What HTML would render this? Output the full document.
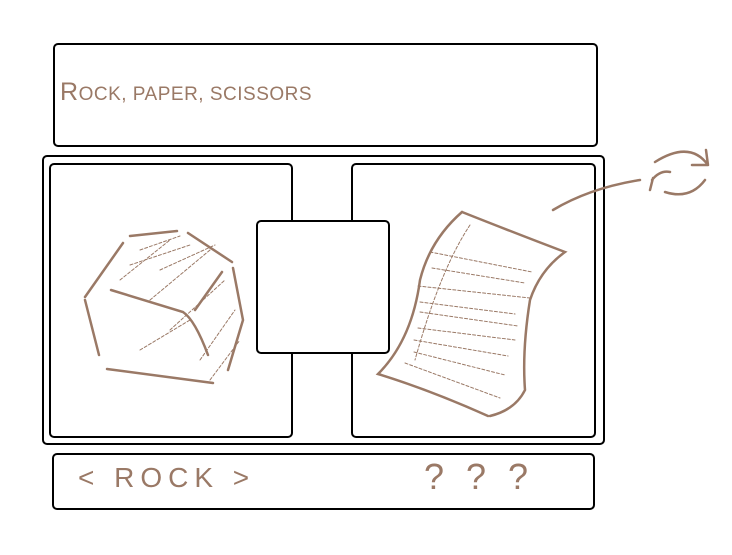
<!DOCTYPE html>
<html><head><style>
body{margin:0;width:732px;height:555px;background:#fff;position:relative;overflow:hidden;font-family:"Liberation Sans",sans-serif;}
.b{position:absolute;border:2px solid #000;border-radius:5px;box-sizing:border-box;background:transparent}
.t{position:absolute;color:#9a7966;white-space:nowrap}
</style></head><body>
<div class="b" style="left:53px;top:43px;width:545px;height:104px"></div>
<div class="b" style="left:42px;top:155px;width:563px;height:290px"></div>
<div class="b" style="left:49px;top:163px;width:244px;height:275px"></div>
<div class="b" style="left:351px;top:163px;width:245px;height:275px"></div>
<div class="b" style="left:256px;top:220px;width:134px;height:134px;background:#fff"></div>
<div class="b" style="left:52px;top:453px;width:543px;height:57px"></div>
<div class="t" style="left:60px;top:78px;font-size:25px;letter-spacing:0.5px"><span>R</span><span style="font-size:19px">OCK, PAPER, SCISSORS</span></div>
<div class="t" style="left:78px;top:462px;font-size:28px;letter-spacing:6px">&lt; ROCK &gt;</div>
<div class="t" style="left:424px;top:456px;font-size:36px;letter-spacing:22px">???</div>
<svg width="732" height="555" style="position:absolute;left:0;top:0" fill="none" stroke="#9a7966" stroke-linecap="round">
<g stroke-width="2.5">
<path d="M130 236 L177 231"/><path d="M188 233 L232 262"/><path d="M233 268 L243 320 L228 370"/>
<path d="M107 369 L213 383"/><path d="M99 355 L85 300"/><path d="M85 297 L123 243"/>
<path d="M111 290 L183 312 Q195 320 208 355"/><path d="M222 272 L195 310"/>
<path d="M462 212 Q520 235 565 252 Q540 270 530 300 Q522 350 525 390 Q515 410 490 416"/>
<path d="M462 212 Q430 240 420 280 Q412 340 378 374 Q430 390 488 416"/>
<path d="M553 210 Q590 188 640 180"/>
<path d="M655 162 Q690 140 708 165 L706 150 M708 165 L692 165"/>
<path d="M652 180 Q660 170 670 172 M653 178 L650 190 M705 180 Q690 200 665 192"/>
</g>
<g stroke-width="1" stroke-dasharray="3 2">
<path d="M430 252 L532 272"/><path d="M432 268 L525 283"/><path d="M418 286 L530 298"/>
<path d="M420 302 L515 314"/><path d="M420 312 L518 326"/><path d="M418 328 L515 340"/>
<path d="M414 340 L508 356"/><path d="M414 352 L505 375"/><path d="M405 363 L500 398"/>
<path d="M470 225 Q440 270 415 360"/>
<path d="M140 250 L180 236 M120 280 L170 240 M150 300 L210 250 M170 330 L225 280 M200 360 L235 310 M140 350 L190 320 M210 380 L240 340 M130 265 L190 245 M160 270 L215 245"/>
</g>
</svg>
</body></html>
